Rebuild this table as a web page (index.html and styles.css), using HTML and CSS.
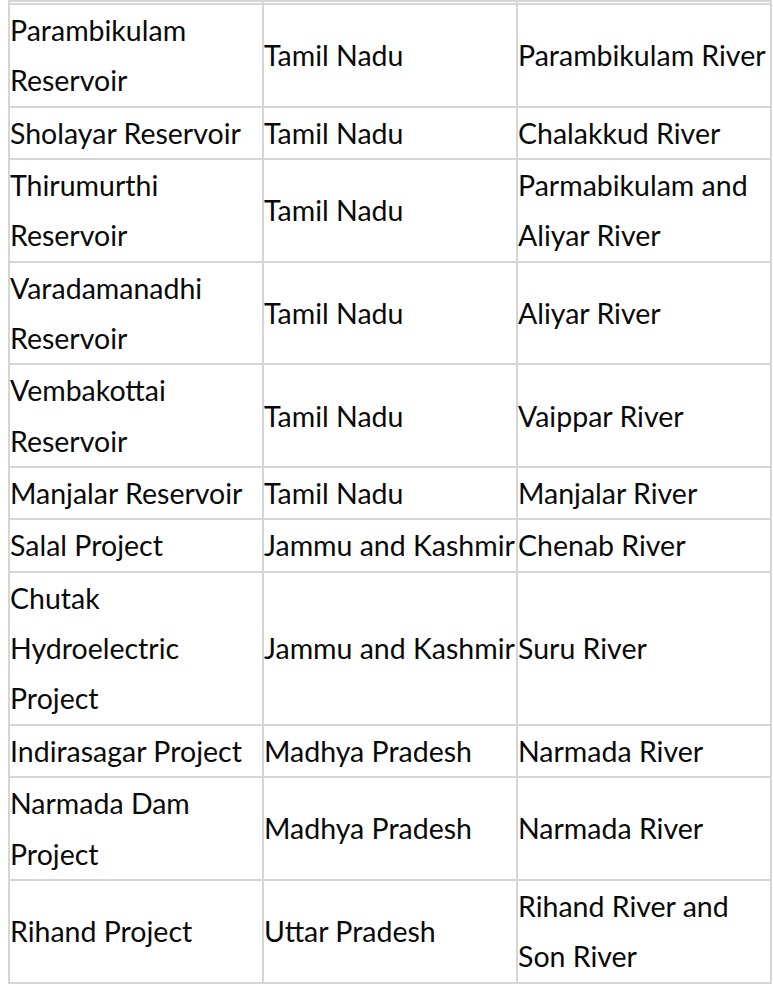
FILE: index.html
```html
<!DOCTYPE html>
<html>
<head>
<meta charset="utf-8">
<link rel="stylesheet" href="styles.css">
</head>
<body>
<table class="dams">
<tbody>
<tr class="cut"><td></td><td></td><td></td></tr>
<tr><td>Parambikulam Reservoir</td><td>Tamil Nadu</td><td>Parambikulam River</td></tr>
<tr><td>Sholayar Reservoir</td><td>Tamil Nadu</td><td>Chalakkud River</td></tr>
<tr><td>Thirumurthi Reservoir</td><td>Tamil Nadu</td><td>Parmabikulam and Aliyar River</td></tr>
<tr><td>Varadamanadhi Reservoir</td><td>Tamil Nadu</td><td>Aliyar River</td></tr>
<tr><td>Vembakottai Reservoir</td><td>Tamil Nadu</td><td>Vaippar River</td></tr>
<tr><td>Manjalar Reservoir</td><td>Tamil Nadu</td><td>Manjalar River</td></tr>
<tr><td>Salal Project</td><td>Jammu and Kashmir</td><td>Chenab River</td></tr>
<tr><td>Chutak Hydroelectric Project</td><td>Jammu and Kashmir</td><td>Suru River</td></tr>
<tr><td>Indirasagar Project</td><td>Madhya Pradesh</td><td>Narmada River</td></tr>
<tr><td>Narmada Dam Project</td><td>Madhya Pradesh</td><td>Narmada River</td></tr>
<tr><td>Rihand Project</td><td>Uttar Pradesh</td><td>Rihand River and Son River</td></tr>
</tbody>
</table>
</body>
</html>
```
FILE: styles.css
```css
html, body {
  background: #ffffff;
}
body {
  margin: 0 0 0 8px;
  font-family: Lato, "Open Sans", sans-serif;
  color: #0a0a0a;
}
.dams {
  width: 764px;
  table-layout: fixed;
  border-collapse: collapse;
  font-size: 28.5px;
  line-height: 50.34px;
}
.dams td {
  border: 2px solid #d5d5d5;
  padding: 0;
  vertical-align: middle;
  text-align: left;
}
.dams .cut td {
  height: 1px;
  line-height: 0;
  padding: 0;
}
```
